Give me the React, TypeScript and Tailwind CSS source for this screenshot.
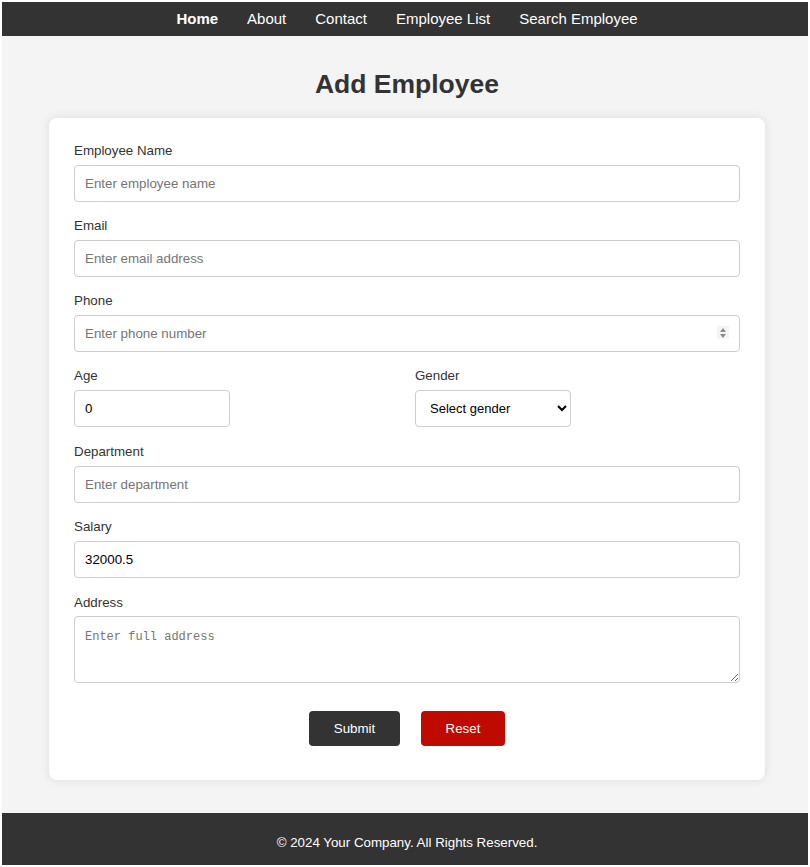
import React from 'react';

const links = ['Home', 'About', 'Contact', 'Employee List', 'Search Employee'];

const inputCls =
  'block w-full h-[37px] px-[10px] border border-[#ccc] rounded-[4px] bg-white text-[13.33px] text-black placeholder:text-[#757575] outline-none';

const Field = ({ label, children, mb = 'mb-[16px]' }: { label: string; children: React.ReactNode; mb?: string }) => (
  <div className={mb}>
    <label className="block text-[13.33px] leading-[16px] text-[#333] mb-[6px]">{label}</label>
    {children}
  </div>
);

export default function App() {
  return (
    <div className="min-h-screen bg-white p-[2px] font-['Liberation_Sans',Arial,sans-serif]">
      <div className="bg-[#f4f4f4] min-h-[863px] flex flex-col">
        <nav className="h-[34px] bg-[#333] flex items-center justify-center gap-[29px] pl-[4px]">
          {links.map((l, i) => (
            <a key={l} className={`text-white text-[15px] ${i === 0 ? 'font-bold' : ''}`}>
              {l}
            </a>
          ))}
        </nav>

        <main className="flex-1 pt-[33px] pb-[33px] pl-[4px]">
          <h1 className="text-center text-[26.5px] leading-[30px] font-bold text-[#333]">Add Employee</h1>

          <div className="mx-auto mt-[19px] w-[716px] bg-white rounded-[8px] shadow-[0_0_10px_rgba(0,0,0,0.1)] pt-[25px] px-[25px] pb-[34px]">
            <Field label="Employee Name">
              <input className={inputCls} placeholder="Enter employee name" />
            </Field>
            <Field label="Email">
              <input className={inputCls} placeholder="Enter email address" />
            </Field>
            <Field label="Phone">
              <div className="relative">
                <input className={inputCls} placeholder="Enter phone number" />
                <div className="absolute right-[11px] top-[11px] w-[12px] h-[13px] bg-[#f4f4f4] flex items-center justify-center">
                  <svg width="8" height="12" viewBox="0 0 8 12">
                    <path d="M4 1 L7 5 H1 Z" fill="#8a8a8a" />
                    <path d="M4 11 L7 7 H1 Z" fill="#8a8a8a" />
                  </svg>
                </div>
              </div>
            </Field>

            <div className="grid grid-cols-2 gap-x-[16px] mb-[1px]">
              <Field label="Age">
                <input className={`${inputCls} !w-[156px]`} defaultValue="0" />
              </Field>
              <Field label="Gender">
                <select className="block w-[156px] h-[37px] pl-[10px] pr-[6px] border border-[#ccc] rounded-[4px] bg-white text-[13px] text-black outline-none">
                  <option>Select gender</option>
                  <option>Male</option>
                  <option>Female</option>
                </select>
              </Field>
            </div>

            <Field label="Department">
              <input className={inputCls} placeholder="Enter department" />
            </Field>
            <Field label="Salary" mb="mb-[17px]">
              <input className={inputCls} defaultValue="32000.5" />
            </Field>
            <div>
              <label className="block text-[13.33px] leading-[16px] text-[#333] mb-[5px]">Address</label>
              <textarea
                className="block w-full h-[67px] px-[10px] py-[11px] border border-[#ccc] rounded-[4px] bg-white text-[12px] font-['Liberation_Mono',monospace] placeholder:text-[#757575] outline-none"
                placeholder="Enter full address"
              />
            </div>

            <div className="flex justify-center gap-[21px] mt-[28px]">
              <button className="w-[91px] h-[35px] bg-[#333] text-white text-[13.33px] rounded-[4px]">Submit</button>
              <button className="w-[84px] h-[35px] bg-[#bf0a00] text-white text-[13.33px] rounded-[4px]">Reset</button>
            </div>
          </div>
        </main>

        <footer className="h-[52px] bg-[#333] flex items-center justify-center pt-[8px] pl-[4px] text-white text-[13.33px]">
          © 2024 Your Company. All Rights Reserved.
        </footer>
      </div>
    </div>
  );
}
